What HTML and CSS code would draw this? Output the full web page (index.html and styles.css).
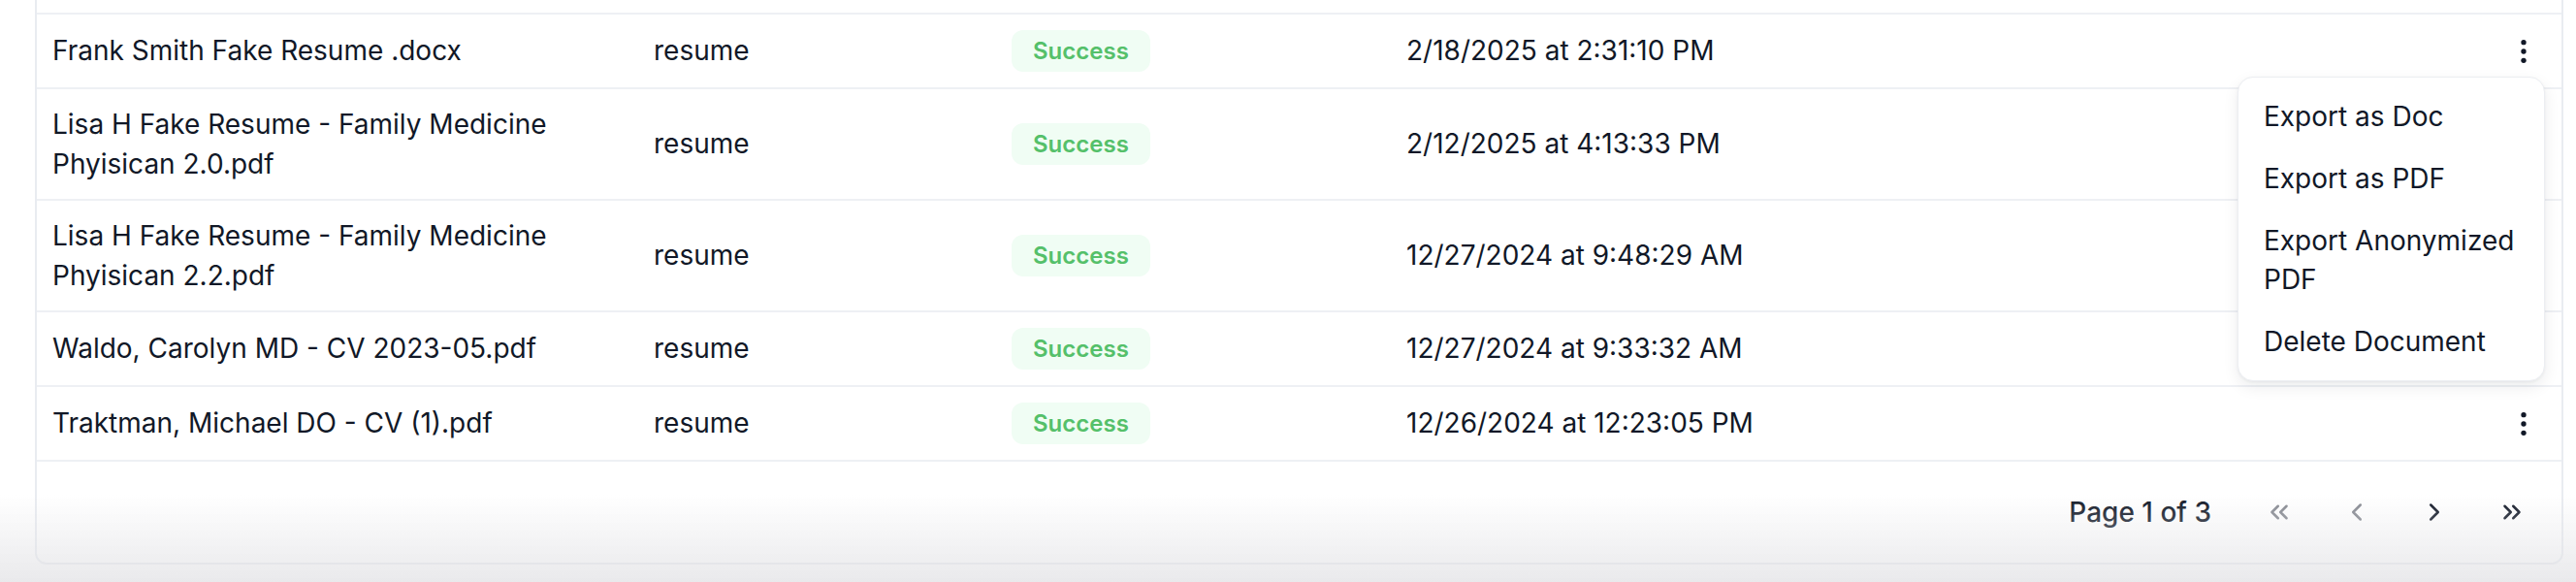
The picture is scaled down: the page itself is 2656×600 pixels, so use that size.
FILE: index.html
```html
<!DOCTYPE html>
<html>
<head>
    <title>Documents</title>
    <link rel="stylesheet" href="styles.css">
</head>
<body>
    <div class="page">
        <div class="card">
            <table class="docs">
                <colgroup>
                    <col class="col-name">
                    <col class="col-type">
                    <col class="col-status">
                    <col class="col-date">
                    <col class="col-actions">
                </colgroup>
                <tbody>
                    <tr>
                        <td>Frank Smith Fake Resume .docx</td>
                        <td>resume</td>
                        <td><span class="badge">Success</span></td>
                        <td>2/18/2025 at 2:31:10 PM</td>
                        <td class="actions">
                            <div class="dropdown">
                                <button class="kebab" aria-label="More">
                                    <svg viewBox="0 0 24 24" width="32" height="32"><circle cx="12" cy="5" r="2"/><circle cx="12" cy="12" r="2"/><circle cx="12" cy="19" r="2"/></svg>
                                </button>
                                <div class="menu">
                                    <div class="menu-item">Export as Doc</div>
                                    <div class="menu-item">Export as PDF</div>
                                    <div class="menu-item">Export Anonymized PDF</div>
                                    <div class="menu-item">Delete Document</div>
                                </div>
                            </div>
                        </td>
                    </tr>
                    <tr>
                        <td>Lisa H Fake Resume - Family Medicine Phyisican 2.0.pdf</td>
                        <td>resume</td>
                        <td><span class="badge">Success</span></td>
                        <td>2/12/2025 at 4:13:33 PM</td>
                        <td class="actions"></td>
                    </tr>
                    <tr>
                        <td>Lisa H Fake Resume - Family Medicine Phyisican 2.2.pdf</td>
                        <td>resume</td>
                        <td><span class="badge">Success</span></td>
                        <td>12/27/2024 at 9:48:29 AM</td>
                        <td class="actions"></td>
                    </tr>
                    <tr>
                        <td>Waldo, Carolyn MD - CV 2023-05.pdf</td>
                        <td>resume</td>
                        <td><span class="badge">Success</span></td>
                        <td>12/27/2024 at 9:33:32 AM</td>
                        <td class="actions"></td>
                    </tr>
                    <tr>
                        <td>Traktman, Michael DO - CV (1).pdf</td>
                        <td>resume</td>
                        <td><span class="badge">Success</span></td>
                        <td>12/26/2024 at 12:23:05 PM</td>
                        <td class="actions">
                            <div class="dropdown">
                                <button class="kebab" aria-label="More">
                                    <svg viewBox="0 0 24 24" width="32" height="32"><circle cx="12" cy="5" r="2"/><circle cx="12" cy="12" r="2"/><circle cx="12" cy="19" r="2"/></svg>
                                </button>
                            </div>
                        </td>
                    </tr>
                </tbody>
            </table>
            <div class="pager">
                <span class="page-label">Page 1 of 3</span>
                <button class="page-btn" disabled aria-label="First page">
                    <svg viewBox="0 0 24 24" width="30" height="30"><path d="m11 17-5-5 5-5"/><path d="m18 17-5-5 5-5"/></svg>
                </button>
                <button class="page-btn" disabled aria-label="Previous page">
                    <svg viewBox="0 0 24 24" width="30" height="30"><path d="m15 18-6-6 6-6"/></svg>
                </button>
                <button class="page-btn" aria-label="Next page">
                    <svg viewBox="0 0 24 24" width="30" height="30"><path d="m9 18 6-6-6-6"/></svg>
                </button>
                <button class="page-btn" aria-label="Last page">
                    <svg viewBox="0 0 24 24" width="30" height="30"><path d="m6 17 5-5-5-5"/><path d="m13 17 5-5-5-5"/></svg>
                </button>
            </div>
        </div>
    </div>
    <div class="fade"></div>
</body>
</html>
```

FILE: styles.css
```css
body {
    margin: 0;
    background-color: #ffffff;
    font-family: "Inter", "Noto Sans", sans-serif;
    font-size: 28px;
    line-height: 40.5px;
    color: #111827;
}
.page {
    padding: 0 13px 0 36px;
}
.card {
    margin-top: -40px;
    padding-top: 51px;
    background-color: #ffffff;
    border: 2px solid #e9ecf1;
    border-radius: 12px;
}
.docs {
    width: 100%;
    table-layout: fixed;
    border-collapse: collapse;
}
.col-name { width: 620px; }
.col-type { width: 369px; }
.col-status { width: 407px; }
.col-actions { width: 110px; }
.docs tr {
    border-top: 2px solid #eef0f4;
}
.docs tr:last-child {
    border-bottom: 2px solid #eef0f4;
}
.docs td {
    padding: 16px 16px;
    vertical-align: middle;
}
.badge {
    display: inline-block;
    vertical-align: top;
    padding: 4px 22px;
    line-height: 35px;
    font-size: 24px;
    font-weight: 600;
    color: #55c06a;
    background-color: #f0fdf4;
    border-radius: 12px;
}
td.actions {
    text-align: right;
    padding-right: 17px;
    height: 43px;
}
.dropdown {
    position: relative;
    display: inline-block;
    vertical-align: top;
}
.kebab {
    display: flex;
    align-items: center;
    justify-content: center;
    width: 44px;
    height: 42px;
    padding: 0;
    border: none;
    background: none;
    cursor: pointer;
}
.kebab svg {
    fill: #111827;
}
.menu {
    position: absolute;
    top: calc(100% + 5px);
    right: 0;
    z-index: 10;
    width: 317px;
    box-sizing: border-box;
    padding: 8px;
    text-align: left;
    background-color: #ffffff;
    border: 1px solid #eceef2;
    border-radius: 16px;
    box-shadow: 0 6px 16px rgba(15, 23, 42, 0.08), 0 1px 3px rgba(15, 23, 42, 0.05);
}
.menu-item {
    padding: 12px 18px;
    line-height: 40px;
    cursor: pointer;
}
.pager {
    display: flex;
    align-items: center;
    justify-content: flex-end;
    gap: 26px;
    padding: 25px 24px;
}
.page-label {
    font-weight: 500;
    margin-right: 17px;
}
.page-btn {
    display: flex;
    align-items: center;
    justify-content: center;
    width: 54px;
    height: 54px;
    padding: 0;
    border: none;
    background: none;
    color: #111827;
    cursor: pointer;
}
.page-btn:disabled {
    opacity: 0.5;
    cursor: default;
}
.page-btn svg {
    fill: none;
    stroke: currentColor;
    stroke-width: 2;
    stroke-linecap: round;
    stroke-linejoin: round;
}
.fade {
    position: fixed;
    left: 0;
    right: 0;
    bottom: 0;
    height: 90px;
    pointer-events: none;
    background: linear-gradient(to bottom, rgba(226, 226, 229, 0), rgba(226, 226, 229, 0.75));
}
```
